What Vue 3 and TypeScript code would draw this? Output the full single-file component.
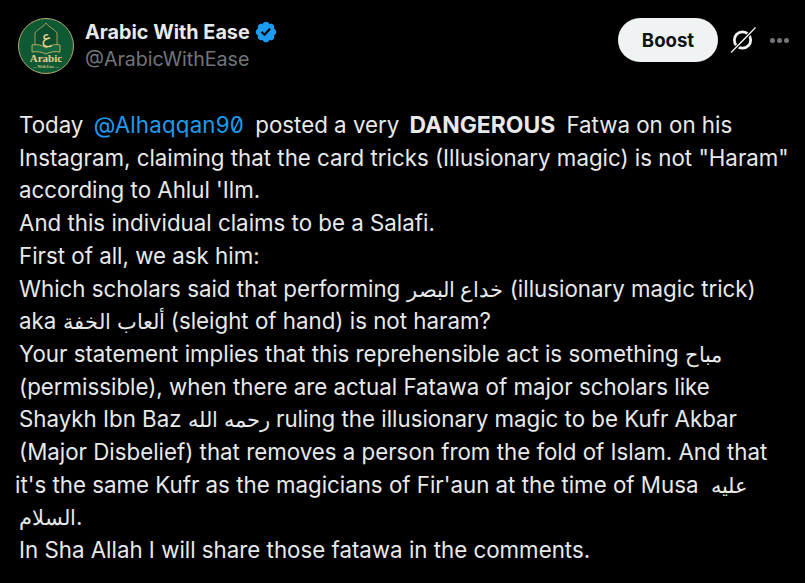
<template>
  <div class="post">
    <header class="head">
      <svg class="avatar" viewBox="0 0 56 56" aria-hidden="true">
        <circle cx="28" cy="28" r="27.5" fill="#0e5a35" stroke="#b9a868" stroke-width="1" />
        <path d="M28 5c2 4 9 6 11 10v15H17V15c2-4 9-6 11-10z" fill="#0b4f2e" stroke="#b7a35f" stroke-width="0.9" />
        <path d="M14 27c5-1 10 0 14 3 4-3 9-4 14-3v7c-5-1-10 0-14 2-4-2-9-3-14-2z" fill="#15683f" stroke="#c9b36a" stroke-width="0.9" />
        <text x="28.5" y="25" class="logo-letter">ع</text>
        <text x="28" y="44" class="logo-big">Arabic</text>
        <text x="28" y="49.5" class="logo-small">— With Ease —</text>
      </svg>
      <div class="names">
        <div class="name-row">
          <span class="name">Arabic With Ease</span>
          <svg class="badge" viewBox="0 0 22 22" aria-hidden="true">
            <path fill="#1d9bf0" d="M20.396 11c-.018-.646-.215-1.275-.57-1.816-.354-.54-.852-.972-1.438-1.246.223-.607.27-1.264.14-1.897-.131-.634-.437-1.218-.882-1.687-.47-.445-1.053-.75-1.687-.882-.633-.13-1.29-.083-1.897.14-.273-.587-.704-1.086-1.245-1.44S11.647 1.62 11 1.604c-.646.017-1.273.213-1.813.568s-.969.854-1.24 1.44c-.608-.223-1.267-.272-1.902-.14-.635.13-1.22.436-1.69.882-.445.47-.749 1.055-.878 1.688-.13.633-.08 1.29.144 1.896-.587.274-1.087.705-1.443 1.245-.356.54-.555 1.17-.574 1.817.02.647.218 1.276.574 1.817.356.54.856.972 1.443 1.245-.224.606-.274 1.263-.144 1.896.13.634.433 1.218.877 1.688.47.443 1.054.747 1.687.878.633.132 1.29.084 1.897-.136.274.586.705 1.084 1.246 1.439.54.354 1.17.551 1.816.569.647-.016 1.276-.213 1.817-.567s.972-.854 1.245-1.44c.604.239 1.266.296 1.903.164.636-.132 1.22-.447 1.68-.907.46-.46.776-1.044.908-1.681s.075-1.299-.165-1.903c.586-.274 1.084-.705 1.439-1.246.354-.54.551-1.17.569-1.816z" />
            <path fill="#000" d="M9.662 14.85l-3.429-3.428 1.293-1.302 2.072 2.072 4.4-4.794 1.347 1.246z" />
          </svg>
        </div>
        <div class="handle">@ArabicWithEase</div>
      </div>
      <div class="actions">
        <button class="boost">Boost</button>
        <svg class="grok" viewBox="0 0 26 26" aria-hidden="true">
          <circle cx="12.5" cy="13" r="8.2" fill="none" stroke="#eff3f4" stroke-width="2.8" />
          <path d="M2 25L25 1" stroke="#000" stroke-width="3.4" />
          <path d="M1 25.5L25.5 0.5L12 14.5z" fill="#eff3f4" stroke="#eff3f4" stroke-width="1.2" />
        </svg>
        <div class="more"><i></i><i></i><i></i></div>
      </div>
    </header>

    <div class="body">
      <div class="line">Today <a class="mention">@Alhaqqan90</a> posted a very <b>DANGEROUS</b> Fatwa on on his</div>
      <div class="line">Instagram, claiming that the card tricks (Illusionary magic) is not "Haram"</div>
      <div class="line">according to Ahlul 'Ilm.</div>
      <div class="line">And this individual claims to be a Salafi.</div>
      <div class="line">First of all, we ask him:</div>
      <div class="line">Which scholars said that performing <span class="ar">خداع البصر</span> (illusionary magic trick)</div>
      <div class="line">aka <span class="ar">ألعاب الخفة</span> (sleight of hand) is not haram?</div>
      <div class="line">Your statement implies that this reprehensible act is something <span class="ar">مباح</span></div>
      <div class="line">(permissible), when there are actual Fatawa of major scholars like</div>
      <div class="line">Shaykh Ibn Baz <span class="ar">رحمه الله</span> ruling the illusionary magic to be Kufr Akbar</div>
      <div class="line">(Major Disbelief) that removes a person from the fold of Islam. And that</div>
      <div class="line out">it's the same Kufr as the magicians of Fir'aun at the time of Musa &nbsp;<span class="ar">عليه</span></div>
      <div class="line"><span class="ar">السلام</span>.</div>
      <div class="line">In Sha Allah I will share those fatawa in the comments.</div>
    </div>
  </div>
</template>

<script setup lang="ts">
</script>

<style>
html, body {
  background: #000;
}
</style>

<style scoped>
.post {
  width: 805px;
  height: 583px;
  overflow: hidden;
  background: #000;
  color: #e7e9ea;
  font-family: Inter, "Noto Sans", "Liberation Sans", sans-serif;
}

.head {
  display: flex;
  align-items: flex-start;
  padding: 18px 16px 0 18px;
}

.avatar {
  width: 56px;
  height: 56px;
  flex: none;
  margin-right: 11px;
}

.logo-letter {
  font-family: "Noto Sans", "DejaVu Sans", sans-serif;
  font-size: 17px;
  fill: #e6d28e;
  text-anchor: middle;
}

.logo-big {
  font-family: "Liberation Serif", serif;
  font-size: 11px;
  font-weight: 700;
  fill: #e6d28e;
  text-anchor: middle;
}

.logo-small {
  font-family: "Liberation Serif", serif;
  font-size: 3.8px;
  font-weight: 700;
  fill: #d8c47f;
  text-anchor: middle;
}

.name-row {
  display: flex;
  align-items: center;
  height: 27px;
}

.name {
  font-size: 19.8px;
  font-weight: 700;
  color: #e7e9ea;
}

.badge {
  width: 24px;
  height: 24px;
  margin-left: 4px;
}

.handle {
  font-size: 19.6px;
  line-height: 28px;
  color: #71767b;
}

.actions {
  display: flex;
  align-items: center;
  margin-left: auto;
}

.boost {
  width: 100px;
  height: 44px;
  border: none;
  border-radius: 22px;
  background: #eff3f4;
  color: #0f1419;
  font-family: inherit;
  font-size: 18.6px;
  font-weight: 700;
}

.grok {
  width: 26px;
  height: 26px;
  margin-left: 12px;
}

.more {
  display: flex;
  gap: 2px;
  margin-left: 14px;
}

.more i {
  width: 5px;
  height: 5px;
  border-radius: 50%;
  background: #71767b;
}

.body {
  margin-top: 35px;
  padding-left: 19px;
  font-size: 22.3px;
  line-height: 32.7px;
}

.line {
  white-space: pre;
}

.line.out {
  margin-left: -4px;
}

.ar {
  font-size: 0.95em;
}

.mention {
  color: #1d9bf0;
  margin: 0 5px 0 4px;
  font-feature-settings: "zero";
  letter-spacing: 0.2px;
}

.line b {
  margin: 0 5px 0 4px;
  font-weight: 700;
  font-size: 22.9px;
}
</style>
